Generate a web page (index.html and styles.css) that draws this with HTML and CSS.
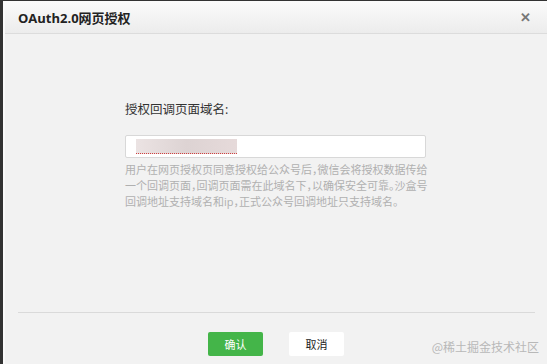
FILE: index.html
```html
<!DOCTYPE html>
<html lang="zh-CN">
<head>
  <meta charset="UTF-8">
  <title>OAuth2.0网页授权</title>
  <link rel="stylesheet" href="styles.css">
</head>
<body>
  <div class="dialog">
    <div class="dialog-hd">
      <h3>OAuth2.0网页授权</h3>
      <span class="close">&#x2715;</span>
    </div>
    <div class="dialog-bd">
      <div class="form">
        <label class="label">授权回调页面域名:</label>
        <div class="input">
          <span class="blur"></span>
        </div>
        <p class="tips">用户在网页授权页同意授权给公众号后，微信会将授权数据传给一个回调页面，回调页面需在此域名下，以确保安全可靠。沙盒号回调地址支持域名和ip，正式公众号回调地址只支持域名。</p>
      </div>
    </div>
    <div class="dialog-ft">
      <button class="btn btn-primary">确认</button>
      <button class="btn btn-default">取消</button>
      <span class="mark">@稀土掘金技术社区</span>
    </div>
  </div>
</body>
</html>
```

FILE: styles.css
```css
html, body {
  margin: 0;
  padding: 0;
  height: 100%;
}
body {
  background-color: #333;
  padding: 1px 0 0 3px;
  box-sizing: border-box;
  font-family: 'Open Sans', 'Noto Sans CJK SC', sans-serif;
  color: #333;
}
.dialog {
  height: 100%;
  background-color: #f2f2f2;
  border-left: 2px solid #fafafa;
  display: flex;
  flex-direction: column;
}
.dialog-hd {
  height: 32px;
  padding: 0 16px 0 13px;
  display: flex;
  align-items: center;
  justify-content: space-between;
  background: linear-gradient(#fbfbfb, #ececec);
  border-bottom: 1px solid #dcdcdc;
}
.dialog-hd h3 {
  margin: 0;
  font-size: 13px;
  font-weight: 700;
  color: #222;
}
.close {
  font-size: 13px;
  font-weight: 700;
  color: #777;
}
.dialog-bd {
  flex: 1;
  padding: 68px 0 0 107px;
  margin: 0 12px 0 13px;
  border-bottom: 1px solid #dadada;
}
.form {
  width: 301px;
}
.label {
  display: block;
  font-size: 12.5px;
  line-height: 16px;
  margin-bottom: 17px;
  color: #333;
}
.input {
  background-color: #fff;
  border: 1px solid #d8d8d8;
  border-radius: 2px;
  padding: 3px 10px;
  height: 15px;
}
.blur {
  display: block;
  width: 101px;
  height: 15px;
  background: linear-gradient(90deg, #ebe3e3, #ddd3d3 50%, #e6dada);
  border-bottom: 1px dotted #d04040;
  box-sizing: border-box;
  filter: blur(0.6px);
}
.tips {
  margin: 4px -5px 0 0;
  font-size: 11px;
  line-height: 16px;
  color: #b0b0b0;
  font-feature-settings: "halt";
}
.dialog-ft {
  height: 51px;
  padding: 19px 0 0 203px;
  box-sizing: border-box;
  display: flex;
  align-items: flex-start;
  gap: 26px;
  position: relative;
}
.btn {
  width: 55px;
  height: 24px;
  border: none;
  border-radius: 2px;
  font-family: 'Noto Sans CJK SC', sans-serif;
  font-size: 11px;
  padding: 0;
}
.btn-primary {
  background-color: #44b549;
  color: #fff;
}
.btn-default {
  background-color: #fff;
  color: #222;
}
.mark {
  position: absolute;
  right: 8px;
  bottom: 9px;
  font-family: 'Noto Sans CJK SC', sans-serif;
  font-size: 12px;
  color: #b8b8b8;
}
```
